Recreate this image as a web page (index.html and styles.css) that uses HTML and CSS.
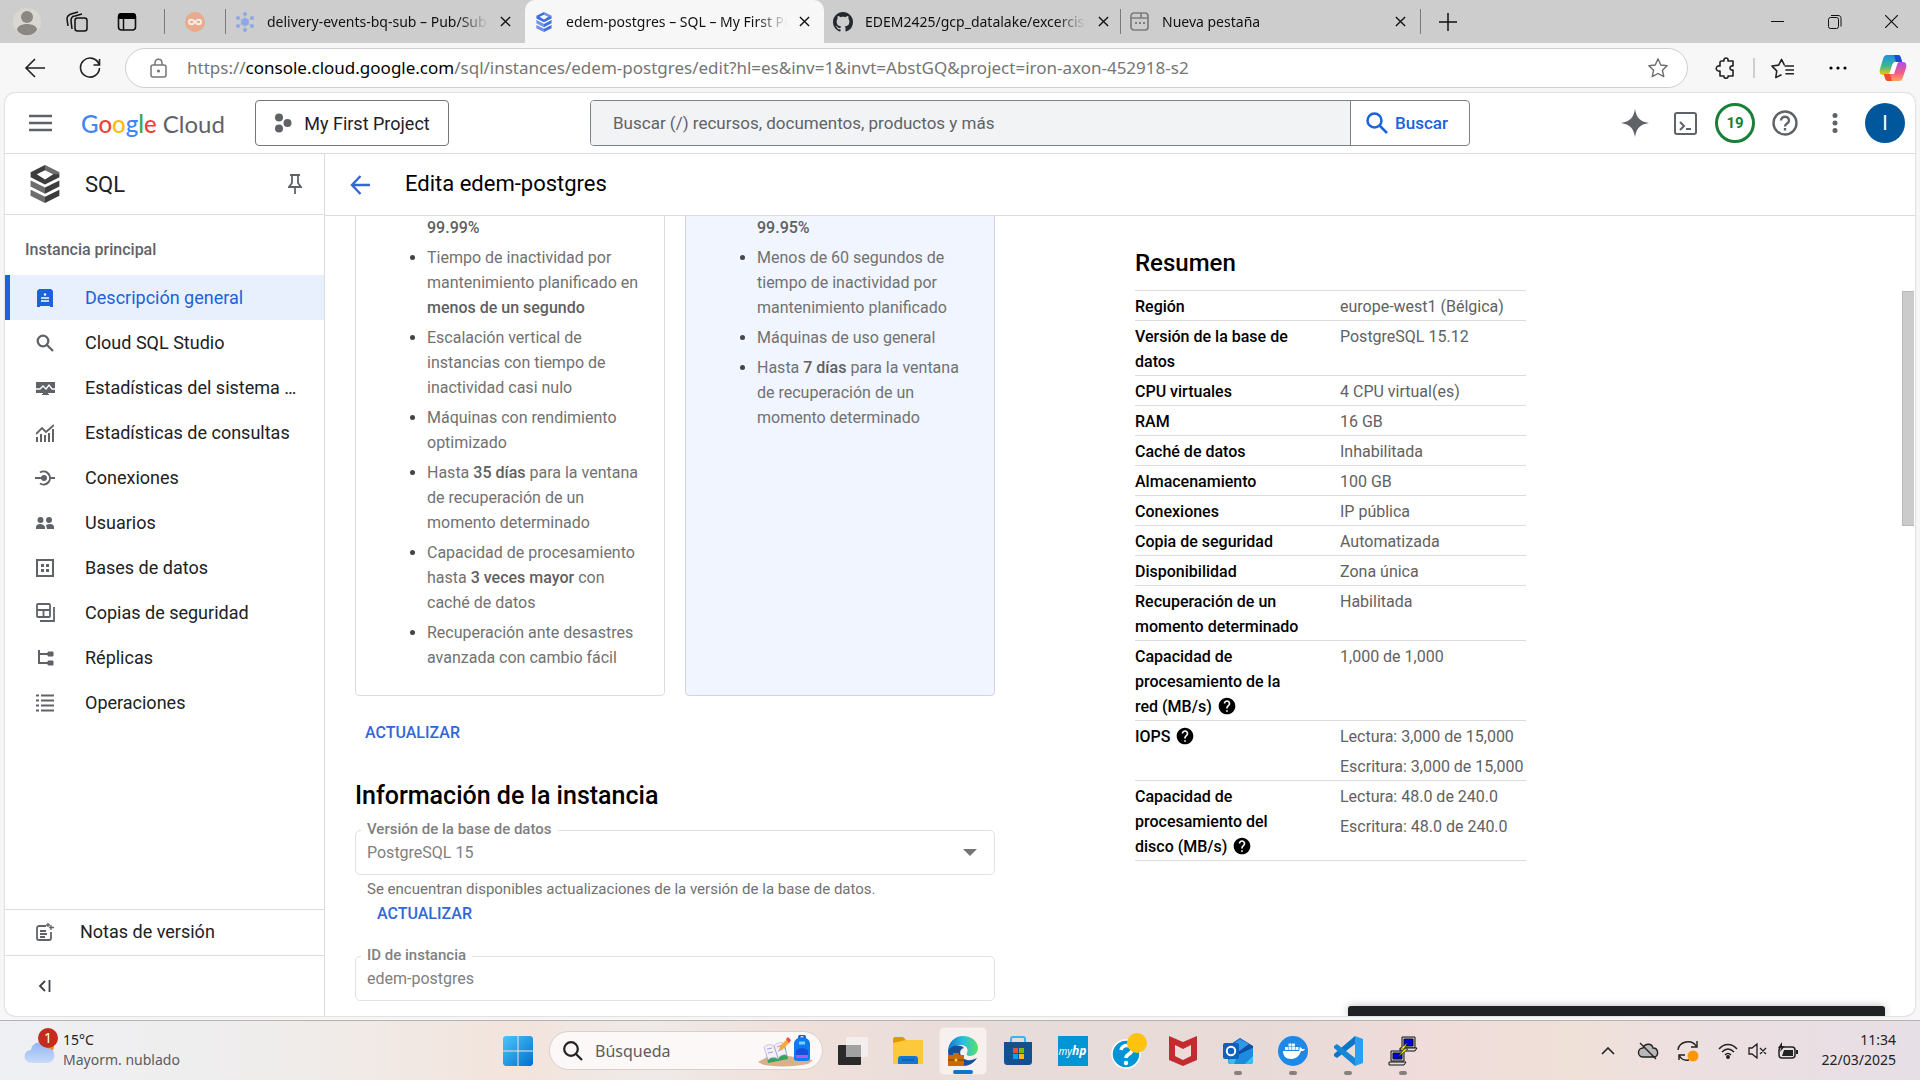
FILE: index.html
```html
<!DOCTYPE html>
<html lang="es">
<head>
<meta charset="utf-8">
<title>edem-postgres – SQL – My First Project</title>
<link rel="stylesheet" href="styles.css">
</head>
<body>
<svg class="defs" aria-hidden="true">
  <defs>
    <symbol id="x" viewBox="0 0 12 12"><path d="M1 1l10 10M11 1L1 11" fill="none" stroke="currentColor" stroke-width="1.5"/></symbol>
    <symbol id="sql" viewBox="0 0 28 37"><path fill="currentColor" fill-rule="evenodd" d="M14 0L0 7v5l14 7 14-7V7zM14 5l8 4-8 5-8-5zM0 15v6l14 7 14-7v-6l-14 7zM0 24v6l14 7 14-7v-6l-14 7z"/><path fill="#fff" fill-opacity=".25" d="M0 15v6l14 7v-6zM0 24v6l14 7v-6zM14 0l14 7v2h-6l-8-4z"/></symbol>
    <symbol id="q" viewBox="0 0 24 24"><path fill="currentColor" d="M12 2C6.48 2 2 6.48 2 12s4.48 10 10 10 10-4.48 10-10S17.52 2 12 2zm1 17h-2v-2h2v2zm2.07-7.75l-.9.92C13.45 12.9 13 13.5 13 15h-2v-.5c0-1.1.45-2.1 1.17-2.83l1.24-1.26c.37-.36.59-.86.59-1.41 0-1.1-.9-2-2-2s-2 .9-2 2H8c0-2.21 1.79-4 4-4s4 1.79 4 4c0 .88-.36 1.68-.93 2.25z"/></symbol>
  </defs>
</svg>
<div class="screen">
  <div class="tabstrip">
    <button class="cell50" aria-label="Perfil"><svg width="28" height="28" viewBox="0 0 28 28"><circle cx="14" cy="14" r="14" fill="#dad7d3"/><circle cx="14" cy="9" r="6" fill="#8b8782"/><path d="M4 22c0-8 20-8 20 0-4 7-16 7-20 0z" fill="#8b8782"/></svg></button>
    <button class="cell50" aria-label="Áreas de trabajo"><svg width="22" height="22" viewBox="0 0 22 22" fill="none" stroke="#111" stroke-width="1.5"><rect x="9" y="7" width="12" height="13" rx="2.5"/><path d="M6 18l-1-8c0-3 1-5 4-5l7-2M2 15L1 8c0-3 1-4 4-5l7-2"/></svg></button>
    <button class="cell50" aria-label="Menú de pestañas"><svg width="20" height="20" viewBox="0 0 20 20"><rect x="1.500" y="2" width="17" height="16" rx="3" fill="none" stroke="#111" stroke-width="1.600"/><path d="M1 7V4c0-2 1-3 3-3h12c2 0 3 1 3 3v3z" fill="#000"/><path d="M6.500 7v11" stroke="#111" stroke-width="1.500"/></svg></button>
    <span class="sep"></span>
    <a class="pinned" href="#" aria-label="OpenWebinars"><svg width="20" height="20" viewBox="0 0 20 20"><circle cx="10" cy="10" r="10" fill="#e9ab8c"/><path d="M10 10c-2-3-6-3-6 0s4 3 6 0 6-3 6 0-4 3-6 0z" fill="none" stroke="#f3ece6" stroke-width="2"/></svg></a>
    <span class="sep"></span>
    <div class="tab">
      <svg width="20" height="20" viewBox="0 0 20 20" fill="#8fa8e6" stroke="#8fa8e6"><circle cx="10" cy="10" r="3.500"/><g stroke-width=".6"><path d="M10 2v16M3 6l14 8M17 6L3 14"/></g><g stroke="none"><circle cx="10" cy="2" r="2"/><circle cx="10" cy="18" r="2"/><circle cx="3" cy="6" r="2"/><circle cx="17" cy="6" r="2"/><circle cx="3" cy="14" r="2"/><circle cx="17" cy="14" r="2"/></g></svg>
      <a class="tab-name" href="#">delivery-events-bq-sub – Pub/Sub</a>
      <button class="close" aria-label="Cerrar"><svg width="11" height="11"><use href="#x"/></svg></button>
    </div>
    <div class="tab active">
      <svg class="sql-blue" width="20" height="20"><use href="#sql"/></svg>
      <a class="tab-name" href="#">edem-postgres – SQL – My First Project</a>
      <button class="close" aria-label="Cerrar"><svg width="11" height="11"><use href="#x"/></svg></button>
    </div>
    <div class="tab">
      <svg width="20" height="20" viewBox="0 0 16 16"><path fill="#24292f" d="M8 0C3.580 0 0 3.580 0 8c0 3.540 2.290 6.530 5.470 7.590.4.070.55-.17.55-.38 0-.19-.01-.82-.01-1.490-2.010.37-2.530-.49-2.690-.94-.09-.23-.48-.94-.82-1.130-.28-.15-.68-.52-.01-.53.63-.01 1.080.58 1.230.82.72 1.210 1.870.87 2.330.66.07-.52.28-.87.51-1.070-1.780-.2-3.640-.89-3.640-3.950 0-.87.31-1.590.82-2.150-.08-.2-.36-1.020.08-2.120 0 0 .67-.21 2.200.82.64-.18 1.320-.27 2-.27s1.360.09 2 .27c1.530-1.040 2.200-.82 2.200-.82.44 1.100.16 1.920.08 2.120.51.56.82 1.270.82 2.150 0 3.070-1.870 3.750-3.650 3.950.29.25.54.73.54 1.480 0 1.070-.01 1.930-.01 2.200 0 .21.15.46.55.38A8.010 8.010 0 0016 8c0-4.420-3.580-8-8-8z"/></svg>
      <a class="tab-name" href="#">EDEM2425/gcp_datalake/excercise</a>
      <button class="close" aria-label="Cerrar"><svg width="11" height="11"><use href="#x"/></svg></button>
    </div>
    <span class="sep tight"></span>
    <div class="tab">
      <svg width="20" height="20" viewBox="0 0 20 20" fill="none" stroke="#7d7d7d" stroke-width="1.700"><rect x="1" y="1" width="17" height="17" rx="3"/><path d="M1 6h17M11 1v5"/><path d="M5 11h2m2 0h2m2 0h2" stroke-width="2"/></svg>
      <a class="tab-name" href="#">Nueva pestaña</a>
      <button class="close" aria-label="Cerrar"><svg width="11" height="11"><use href="#x"/></svg></button>
    </div>
    <span class="sep flush"></span>
    <button class="cell50 plus" aria-label="Nueva pestaña"><svg width="18" height="18" viewBox="0 0 18 18"><path d="M9 0v18M0 9h18" stroke="#111" stroke-width="1.500"/></svg></button>
    <div class="window-buttons">
      <button aria-label="Minimizar"><svg width="13" height="13" viewBox="0 0 13 13"><path d="M0 6.500h13" stroke="#111"/></svg></button>
      <button aria-label="Restaurar"><svg width="14" height="14" viewBox="0 0 14 14" fill="none" stroke="#111"><rect x=".5" y="2.500" width="10" height="11" rx="2"/><path d="M3 .5h7c2 0 3 1 3 3v8"/></svg></button>
      <button aria-label="Cerrar ventana"><svg width="13" height="13" viewBox="0 0 13 13"><path d="M0 0l13 13M13 0L0 13" stroke="#111" stroke-width="1.200"/></svg></button>
    </div>
  </div>

  <div class="toolbar">
    <button class="tool" aria-label="Atrás"><svg width="22" height="20" viewBox="0 0 22 20" fill="none" stroke="#222" stroke-width="1.600"><path d="M21 10H2M11 1l-9 9 9 9"/></svg></button>
    <button class="tool" aria-label="Actualizar"><svg width="22" height="22" viewBox="0 0 22 22" fill="none" stroke="#222" stroke-width="1.600"><path d="M20 7.500A9.500 9.500 0 1 0 20.500 11M20.500 2v6h-6"/></svg></button>
    <form class="address">
      <svg width="18" height="20" viewBox="0 0 18 20" fill="none" stroke="#767676" stroke-width="1.500"><rect x="1" y="7" width="15" height="12" rx="2"/><path d="M5 7V5c0-5 7-5 7 0v2"/><circle cx="8.500" cy="13" r=".8" fill="#555"/></svg>
      <a class="url" href="#">https://<b>console.cloud.google.com</b>/sql/instances/edem-postgres/edit?hl=es&amp;inv=1&amp;invt=AbstGQ&amp;project=iron-axon-452918-s2</a>
      <button type="button" aria-label="Favorito"><svg width="22" height="22" viewBox="0 0 24 24" fill="none" stroke="#6b6b6b" stroke-width="1.500"><path d="M12 2l3 6.700 7 .8-5.200 4.900 1.500 7L12 18l-6.300 3.400 1.500-7L2 9.500l7-.8z" stroke-linejoin="round"/></svg></button>
    </form>
    <button class="tool ext" aria-label="Extensiones"><svg width="22" height="22" viewBox="0 0 22 22" fill="none" stroke="#222" stroke-width="1.600"><path d="M6 4h3c-1-4 5-4 4 0h5v5c-4-1-4 5 0 4v6h-5c1 3-5 3-4 0H5v-5C0 15 0 8 5 9V5z" stroke-linejoin="round"/></svg></button>
    <span class="tool-sep"></span>
    <button class="tool" aria-label="Favoritos"><svg width="23" height="22" viewBox="0 0 24 22" fill="none" stroke="#222" stroke-width="1.600"><path d="M14 8l-3-6-3 6-7 1 5 5-1 7 6-3M14 9h10M15 13h9M15 17h9" stroke-linejoin="round"/></svg></button>
    <button class="tool" aria-label="Más"><svg width="18" height="4" viewBox="0 0 18 4"><circle cx="2" cy="2" r="1.600"/><circle cx="9" cy="2" r="1.600"/><circle cx="16" cy="2" r="1.600"/></svg></button>
    <button class="tool" aria-label="Copilot"><svg width="28" height="28" viewBox="0 0 28 28"><defs><linearGradient id="c1" x1="0" y1="0" x2="0" y2="1"><stop offset="0" stop-color="#1c8fe8"/><stop offset=".55" stop-color="#3bb88c"/><stop offset="1" stop-color="#f5c800"/></linearGradient><linearGradient id="c2" x1="0" y1="0" x2="0" y2="1"><stop offset="0" stop-color="#a951e8"/><stop offset=".55" stop-color="#ef5b8a"/><stop offset="1" stop-color="#ffa45c"/></linearGradient></defs><path d="M8 1h11c2 0 2 1 3 3l1 4h-6c-2 0-3 1-4 3l-2 7c-1 2-2 3-4 3H4c-3 0-4-3-3-6L4 5c1-3 2-4 4-4z" fill="url(#c1)"/><path d="M15 1h4c2 0 2 1 3 3l1 4h-6z" fill="#154fd0"/><path d="M20 27H9c-2 0-2-1-3-3l-1-4h6c2 0 3-1 4-3l2-6c1-2 2-3 4-3h3c3 0 4 3 3 6l-3 9c-1 3-2 4-4 4z" fill="url(#c2)"/><path d="M5 20h6l2 7H9c-2 0-3-2-4-7z" fill="#f0492c"/><path d="M15 8h4l-4 12h-4z" fill="#fff"/></svg></button>
  </div>

  <div class="page">
    <header class="console-bar">
      <button class="burger" aria-label="Menú"><svg width="23" height="18" viewBox="0 0 23 18"><path d="M0 2h23M0 9h23M0 16h23" stroke="#5f6368" stroke-width="2.500"/></svg></button>
      <a class="logo" href="#"><b><span class="g-blue">G</span><span class="g-red">o</span><span class="g-yellow">o</span><span class="g-blue">g</span><span class="g-green">l</span><span class="g-red">e</span></b> Cloud</a>
      <button class="project"><svg width="18" height="20" viewBox="0 0 18 20" fill="#5f6368"><circle cx="5" cy="4.500" r="4"/><circle cx="13.500" cy="10" r="4"/><circle cx="5" cy="15.500" r="4"/></svg>My First Project</button>
      <form class="search">
        <input type="text" aria-label="Buscar" placeholder="Buscar (/) recursos, documentos, productos y más">
        <button type="button"><svg width="22" height="22" viewBox="0 0 22 22" fill="none" stroke="#1a63d8" stroke-width="2.500"><circle cx="8.500" cy="8.500" r="7"/><path d="M13.500 13.500l7.500 7.500"/></svg>Buscar</button>
      </form>
      <div class="console-actions">
        <button aria-label="Gemini"><svg width="28" height="28" viewBox="0 0 28 28"><path d="M14 0c1.500 9 5 12.500 14 14-9 1.500-12.500 5-14 14-1.500-9-5-12.500-14-14 9-1.500 12.500-5 14-14z" fill="#5f6368"/></svg></button>
        <button aria-label="Cloud Shell"><svg width="23" height="23" viewBox="0 0 23 23" fill="none" stroke="#5f6368" stroke-width="2"><rect x="1" y="1" width="21" height="21" rx="2"/><path d="M6 10l4 4-4 4M12 17h5"/></svg></button>
        <button aria-label="Notificaciones"><span class="count">19</span></button>
        <button aria-label="Ayuda"><svg width="26" height="26" viewBox="0 0 26 26" fill="none" stroke="#5f6368" stroke-width="2.400"><circle cx="13" cy="13" r="11.500"/><path d="M9 10.500c0-5 8-5 8 0 0 3-4 3-4 6"/><path d="M13 18v2.500"/></svg></button>
        <button aria-label="Más opciones"><svg width="6" height="20" viewBox="0 0 6 20" fill="#5f6368"><circle cx="3" cy="2.500" r="2.500"/><circle cx="3" cy="10" r="2.500"/><circle cx="3" cy="17.500" r="2.500"/></svg></button>
        <button aria-label="Cuenta"><span class="avatar">I</span></button>
      </div>
    </header>

    <div class="console-body">
      <nav class="sidebar">
        <div class="product">
          <svg class="sql-gray" width="30" height="38"><use href="#sql"/></svg>
          <span class="product-name">SQL</span>
          <button aria-label="Fijar"><svg width="14" height="20" viewBox="0 0 14 20" fill="none" stroke="#5f6368" stroke-width="1.800"><path d="M2 1h10M4 1v8l-3 4h12l-3-4V1M7 13v7"/></svg></button>
        </div>
        <div class="nav-group">Instancia principal</div>
        <a class="nav-item current" href="#"><svg width="18" height="18" viewBox="0 0 18 18"><path d="M3 0h12l2 2v16h-3v-1H4v1H1V2z" fill="#1a63d8"/><path d="M5 9h8M5 12h8" stroke="#fff" stroke-width="1.300"/><circle cx="9" cy="5.500" r="1.200" fill="#fff"/></svg><span>Descripción general</span></a>
        <a class="nav-item" href="#"><svg width="18" height="18" viewBox="0 0 18 18" fill="none" stroke="#5f6368" stroke-width="2.300"><circle cx="7" cy="7" r="5.300"/><path d="M11 11l6 6"/></svg><span>Cloud SQL Studio</span></a>
        <a class="nav-item" href="#"><svg width="19" height="18" viewBox="0 0 19 18"><path d="M0 3h19v11h-7v1H7v-1H0z" fill="#5f6368"/><path d="M0 10h4l3-3 3 3 3-4 3 4h3" stroke="#fff" stroke-width="1.300" fill="none"/><path d="M6 15.500h7" stroke="#5f6368"/></svg><span>Estadísticas del sistema de la instancia</span></a>
        <a class="nav-item" href="#"><svg width="18" height="18" viewBox="0 0 18 18" fill="none" stroke="#5f6368" stroke-width="2"><path d="M0 10l6-6 4 4 8-7" stroke-width="1.800"/><path d="M1 18v-5M5 18v-8M9 18v-7M13 18V9M17 18V5"/></svg><span>Estadísticas de consultas</span></a>
        <a class="nav-item" href="#"><svg width="20" height="18" viewBox="0 0 20 18" fill="none" stroke="#5f6368" stroke-width="2"><path d="M0 9h6M15 9h5M5 3.500a6.500 6.500 0 1 1 0 11"/><circle cx="9" cy="9" r="3" fill="#5f6368" stroke="none"/></svg><span>Conexiones</span></a>
        <a class="nav-item" href="#"><svg width="18" height="18" viewBox="0 0 18 18" fill="#5f6368"><circle cx="4.500" cy="6" r="3"/><circle cx="13" cy="6" r="3"/><path d="M0 15v-2c0-4 8-4 9 0v2zM11 15h7v-2c0-3-4-4-8-2z"/></svg><span>Usuarios</span></a>
        <a class="nav-item" href="#"><svg width="18" height="18" viewBox="0 0 18 18" fill="#5f6368"><rect x="1" y="1" width="16" height="16" fill="none" stroke="#5f6368" stroke-width="2"/><path d="M5 5h3v3H5zM10 5h3v3h-3zM5 10h3v3H5zM10 10h3v3h-3z"/></svg><span>Bases de datos</span></a>
        <a class="nav-item" href="#"><svg width="19" height="19" viewBox="0 0 19 19" fill="none" stroke="#5f6368" stroke-width="1.800"><rect x="1" y="1" width="13" height="13" rx="1"/><path d="M1 7h13M7.500 7v7M4 18h14V4"/></svg><span>Copias de seguridad</span></a>
        <a class="nav-item" href="#"><svg width="17" height="18" viewBox="0 0 17 18" fill="none" stroke="#5f6368" stroke-width="2"><path d="M2 1v13h10M2 5h10"/><path d="M11 3h5v4h-5zM11 12h5v4h-5z" fill="#5f6368" stroke-width="1"/></svg><span>Réplicas</span></a>
        <a class="nav-item" href="#"><svg width="18" height="18" viewBox="0 0 18 18"><path d="M0 1.500h3M0 6.500h3M0 11.500h3M0 16.500h3M5 1.500h13M5 6.500h13M5 11.500h13M5 16.500h13" stroke="#5f6368" stroke-width="2"/></svg><span>Operaciones</span></a>
        <div class="sidebar-foot">
          <a class="notes" href="#"><svg width="18" height="18" viewBox="0 0 18 18" fill="none" stroke="#5f6368" stroke-width="1.800"><path d="M10 3H3c-1 0-2 1-2 2v10c0 1 1 2 2 2h10c1 0 2-1 2-2V9M4 8h6M4 11h7M4 14h5"/><path d="M12 0v4M10 2h4M15 2v5M13 4.500h5" stroke-width="1.300"/></svg><span>Notas de versión</span></a>
          <button class="collapse" aria-label="Contraer"><svg width="13" height="12" viewBox="0 0 13 12" fill="none" stroke="#3c4043" stroke-width="1.800"><path d="M7 1L2 6l5 5M11.500 0v12"/></svg></button>
        </div>
      </nav>

      <main class="main">
        <div class="title-row">
          <button aria-label="Volver"><svg width="20" height="20" viewBox="0 0 20 20" fill="none" stroke="#3367d6" stroke-width="2.400"><path d="M20 10H2M10.500 1L2 10l8.500 9"/></svg></button>
          <h1>Edita edem-postgres</h1>
        </div>
        <div class="scroller">
          <div class="form-col">
            <div class="editions">
              <section class="edition">
                <ul>
                  <li class="rest"><b>99.99%</b></li>
                  <li>Tiempo de inactividad por mantenimiento planificado en <b>menos de un segundo</b></li>
                  <li>Escalación vertical de instancias con tiempo de inactividad casi nulo</li>
                  <li>Máquinas con rendimiento optimizado</li>
                  <li>Hasta <b>35 días</b> para la ventana de recuperación de un momento determinado</li>
                  <li>Capacidad de procesamiento hasta <b>3 veces mayor</b> con caché de datos</li>
                  <li>Recuperación ante desastres avanzada con cambio fácil</li>
                </ul>
              </section>
              <section class="edition chosen">
                <ul>
                  <li class="rest"><b>99.95%</b></li>
                  <li>Menos de 60 segundos de tiempo de inactividad por mantenimiento planificado</li>
                  <li>Máquinas de uso general</li>
                  <li>Hasta <b>7 días</b> para la ventana de recuperación de un momento determinado</li>
                </ul>
              </section>
            </div>
            <button class="text-button upgrade">ACTUALIZAR</button>
            <h2>Información de la instancia</h2>
            <div class="field">
              <label for="version">Versión de la base de datos</label>
              <select id="version" disabled><option>PostgreSQL 15</option></select>
              <svg class="arrow" width="14" height="7" viewBox="0 0 14 7"><path d="M0 0h14L7 7z" fill="#757575"/></svg>
            </div>
            <p class="hint">Se encuentran disponibles actualizaciones de la versión de la base de datos.</p>
            <button class="text-button nested">ACTUALIZAR</button>
            <div class="field">
              <label for="instance">ID de instancia</label>
              <input id="instance" type="text" value="edem-postgres" disabled>
            </div>
          </div>
          <aside class="summary">
            <h2>Resumen</h2>
            <table>
              <tr><th scope="row">Región</th><td>europe-west1 (Bélgica)</td></tr>
              <tr><th scope="row">Versión de la base de datos</th><td>PostgreSQL 15.12</td></tr>
              <tr><th scope="row">CPU virtuales</th><td>4 CPU virtual(es)</td></tr>
              <tr><th scope="row">RAM</th><td>16 GB</td></tr>
              <tr><th scope="row">Caché de datos</th><td>Inhabilitada</td></tr>
              <tr><th scope="row">Almacenamiento</th><td>100 GB</td></tr>
              <tr><th scope="row">Conexiones</th><td>IP pública</td></tr>
              <tr><th scope="row">Copia de seguridad</th><td>Automatizada</td></tr>
              <tr><th scope="row">Disponibilidad</th><td>Zona única</td></tr>
              <tr><th scope="row">Recuperación de un momento determinado</th><td>Habilitada</td></tr>
              <tr><th scope="row">Capacidad de procesamiento de la red (MB/s) <svg class="help" width="20" height="20"><use href="#q"/></svg></th><td>1,000 de 1,000</td></tr>
              <tr><th scope="row">IOPS <svg class="help" width="20" height="20"><use href="#q"/></svg></th><td><div>Lectura: 3,000 de 15,000</div><div>Escritura: 3,000 de 15,000</div></td></tr>
              <tr><th scope="row">Capacidad de procesamiento del disco (MB/s) <svg class="help" width="20" height="20"><use href="#q"/></svg></th><td><div>Lectura: 48.0 de 240.0</div><div>Escritura: 48.0 de 240.0</div></td></tr>
            </table>
          </aside>
          <div class="track"><div class="thumb"></div></div>
        </div>
      </main>
    </div>
    <div class="snackbar"></div>
  </div>

  <footer class="taskbar">
    <div class="weather">
      <svg width="34" height="40" viewBox="0 0 34 40"><defs><linearGradient id="cl" x1="0" y1="0" x2="0" y2="1"><stop offset="0" stop-color="#8fb4f4"/><stop offset="1" stop-color="#c9dcf8"/></linearGradient></defs><circle cx="24" cy="20" r="6" fill="#f08a1c"/><path d="M7 36a6.500 6.500 0 0 1 0-13c1-9 14-10 16-2 10 0 10 15 0 15z" fill="url(#cl)"/><circle cx="24" cy="11" r="10" fill="#c42b1c"/></svg>
      <span class="badge">1</span>
      <div class="weather-text"><span>15°C</span><span class="dim">Mayorm. nublado</span></div>
    </div>
    <div class="apps">
      <button class="app" aria-label="Inicio"><svg width="30" height="30" viewBox="0 0 30 30"><defs><linearGradient id="w" gradientUnits="userSpaceOnUse" x1="0" y1="0" x2="30" y2="30"><stop offset="0" stop-color="#4cc6fa"/><stop offset="1" stop-color="#0070cf"/></linearGradient></defs><path d="M2 0h12.500v14.500H0V2zM15.500 0H28l2 2v12.500H15.500zM0 15.500h14.500V30H2l-2-2zM15.500 15.500H30V28l-2 2H15.500z" fill="url(#w)"/></svg></button>
      <label class="task-search"><svg width="20" height="20" viewBox="0 0 20 20" fill="none" stroke="#222" stroke-width="2.200"><circle cx="8" cy="8" r="6.800"/><path d="M13 13l6 6"/></svg><input type="text" aria-label="Búsqueda" placeholder="Búsqueda"><svg width="58" height="32" viewBox="0 0 58 32"><path d="M1 27c8-5 16-8 24-7l31 5-5 4c-14 3-32 3-44 1z" fill="#d8b08a"/><path d="M8 13l20-3 3 14-20 4z" fill="#35a45a"/><path d="M7 12c4-3 7-3 10-1 2-3 6-4 9-3l4 12c-4-1-8 1-9 4-3-2-7-2-10 1z" fill="#f4f0fa" stroke="#b8aed0" stroke-width=".7"/><path d="M17 11l4 12M10 14l5-1M11 18l5-1M20 12l5-2M21 16l5-2" stroke="#a99fc8"/><path d="M22 15l1-4 7-7 3 3-7 7z" fill="#f9a93a"/><path d="M29 4l2-2 3 3-2 3z" fill="#e8524a"/><path d="M37 9c0-9 16-9 16 0v14c0 3-2 3-8 3s-8 0-8-3z" fill="#0a7cf0"/><path d="M42 3c0-4 6-4 6 0" fill="none" stroke="#0a62c8" stroke-width="2"/><path d="M39 17c0-5 12-5 12 0v6H39z" fill="#1450d8"/><path d="M39 20h12v3H39z" fill="#a75bf0"/><path d="M42 8h6" stroke="#7fd0ff" stroke-width="3"/></svg></label>
      <button class="app" aria-label="Vista de tareas"><svg width="30" height="30" viewBox="0 0 30 30"><rect y="9" width="23" height="20" rx="1" fill="#2a2a2a"/><rect x="8" y="1" width="22" height="20" rx="1" fill="#f2f2f2" fill-opacity=".8"/><path d="M8 9h15v12H8z" fill="#a2a2a2"/></svg></button>
      <button class="app" aria-label="Explorador"><svg width="30" height="30" viewBox="0 0 30 30"><path d="M0 3c0-1 1-2 2-2h8l3 3v5H0z" fill="#dd9a00"/><path d="M0 7l13-3h17v22c0 1 0 2-1 2H1c-1 0-1-1-1-2z" fill="#fdc93a"/><path d="M5 28v-5c0-2 1-3 3-3h14c2 0 3 1 3 3v5z" fill="#1478d0"/><path d="M9 24h12" stroke="#0d4fa0"/></svg></button>
      <button class="app running focused" aria-label="Edge"><svg width="32" height="32" viewBox="0 0 32 32"><defs><linearGradient id="e" x1="0" y1="0" x2="1" y2="0"><stop offset="0" stop-color="#1276cf"/><stop offset=".5" stop-color="#2bbde0"/><stop offset="1" stop-color="#59e067"/></linearGradient></defs><path d="M1 17C1 7 8 1 16 1c9 0 15 6 15 12 0 5-4 8-8 8-3 0-4-1-3-3 2-4-1-8-6-8-6 0-11 4-13 7z" fill="url(#e)"/><path d="M1 16c3-6 12-7 16-3-6 1-5 10 3 12 4 1 7-1 10-2-3 5-8 8-14 8C7 31 1 25 1 16z" fill="#174f9c"/><path d="M6 20v-2h6v2h5v11H1V20z" fill="#c86a0a"/><path d="M1 25h16" stroke="#7a3b00"/><circle cx="9" cy="25" r="1.500" fill="#ffd23a"/></svg></button>
      <button class="app" aria-label="Store"><svg width="30" height="30" viewBox="0 0 30 30"><path d="M8 7V3c0-2 1-2 2-2h10c1 0 2 0 2 2v4" fill="none" stroke="#33b8ee" stroke-width="2"/><path d="M1 6h28v19c0 3-1 4-4 4H5c-3 0-4-1-4-4z" fill="#15508f"/><path d="M10 12h5v5h-5z" fill="#f25022"/><path d="M16 12h5v5h-5z" fill="#7fba00"/><path d="M10 18h5v5h-5z" fill="#00a4ef"/><path d="M16 18h5v5h-5z" fill="#ffb900"/></svg></button>
      <button class="app" aria-label="myHP"><span class="myhp">my<b>hp</b></span></button>
      <button class="app" aria-label="HP Support"><svg width="38" height="38" viewBox="0 0 38 38"><circle cx="17" cy="22" r="14" fill="#0096d6" stroke="#fff" stroke-width="1.500"/><path d="M12 18c1-6 11-6 11 0 0 4-6 4-6 8" fill="none" stroke="#fff" stroke-width="3.500"/><circle cx="17" cy="31" r="2.200" fill="#fff"/><circle cx="28" cy="11" r="10" fill="#ffc20e"/></svg></button>
      <button class="app" aria-label="McAfee"><svg width="28" height="30" viewBox="0 0 28 30"><path d="M0 0l14 6L28 0v24l-14 6-14-6z" fill="#c22b2f"/><path d="M6 9l8 4 8-4v11l-8 4-8-4z" fill="#ecdcd8"/></svg></button>
      <button class="app running" aria-label="Outlook"><svg width="30" height="30" viewBox="0 0 30 30"><path d="M5 10L17 2l13 8v15c0 2-1 3-3 3H8c-2 0-3-1-3-3z" fill="#0f4fa8"/><path d="M8 9l9-6 9 5-11 8z" fill="#2f9ae8"/><path d="M5 24l25-12v13c0 2-1 3-3 3H8c-2 0-3-1-3-4z" fill="#35c0f0"/><path d="M15 19l15-7v8l-8 8H11z" fill="#1c8ce0"/><rect y="7" width="16" height="16" rx="2" fill="#0d62bd"/><circle cx="8" cy="15" r="4.200" fill="none" stroke="#fff" stroke-width="2"/></svg></button>
      <button class="app running" aria-label="Docker"><svg width="30" height="30" viewBox="0 0 30 30"><circle cx="15" cy="15" r="15" fill="#1d88e8"/><path d="M5 15h16c1-1 0-3 1-4 1 1 2 1 2 2h3c-1 2-2 2-4 2-2 6-6 8-10 8-5 0-8-3-8-8z" fill="#fff"/><path d="M7 11h3v3H7zM10.500 11h3v3h-3zM14 11h3v3h-3zM17.500 11h3v3h-3zM10.500 7.500h3v3h-3zM14 7.500h3v3h-3z" fill="#e8f3fd"/></svg></button>
      <button class="app running" aria-label="Visual Studio Code"><svg width="30" height="30" viewBox="0 0 30 30"><path d="M22 0l8 3v24l-8 3z" fill="#27a0f0"/><path d="M22 0v8L4 22l-3-2v-2z" fill="#0a76c4"/><path d="M22 30v-8L4 8l-3 2v2z" fill="#1587d6"/></svg></button>
      <button class="app running" aria-label="PuTTY"><svg width="30" height="30" viewBox="0 0 30 30" stroke="#111"><path d="M14 1h13v11H14z" fill="#ccc"/><path d="M16 3h9v7h-9z" fill="#0000e0"/><path d="M12 12h17l-2 3H12z" fill="#ddd"/><path d="M3 15h13v10H3z" fill="#ccc"/><path d="M5 17h9v6H5z" fill="#0000e0"/><path d="M1 26h17l-2 3H1z" fill="#ddd"/><path d="M20 6l-8 7h4l-6 8 10-8h-4z" fill="#ff0" stroke-width=".6"/></svg></button>
    </div>
    <div class="tray">
      <button class="chev" aria-label="Iconos ocultos"><svg width="14" height="8" viewBox="0 0 14 8" fill="none" stroke="#222" stroke-width="1.600"><path d="M1 7l6-6 6 6"/></svg></button>
      <button class="cloud" aria-label="OneDrive"><svg width="22" height="18" viewBox="0 0 22 18" fill="#b9b7b7" stroke="#222" stroke-width="1.400"><path d="M6 15a4.500 4.500 0 0 1 0-9c2-5 9-5 10 0 6 0 6 9 1 9zM3 1l16 16"/></svg></button>
      <button class="sync" aria-label="Sincronización"><svg width="22" height="22" viewBox="0 0 22 22" fill="none" stroke="#222" stroke-width="1.400"><path d="M1 10C2 1 15-1 19 6M20 1v6h-6M12 20c-5 1-8-1-10-5M2 20v-5h6"/><circle cx="16" cy="16" r="5.500" fill="#ff9800" stroke="none"/></svg></button>
      <button class="status" aria-label="Red, volumen y batería">
        <svg width="20" height="16" viewBox="0 0 20 16" fill="none" stroke="#222" stroke-width="1.500"><path d="M1 6c5-6 13-6 18 0M4 9c4-4 8-4 12 0M7 12c2-2 4-2 6 0"/><circle cx="10" cy="14" r="1.200" fill="#222"/></svg>
        <svg width="20" height="16" viewBox="0 0 20 16" fill="none" stroke="#222" stroke-width="1.300"><path d="M1 5h3l5-4v14l-5-4H1zM12 5l6 6M18 5l-6 6"/></svg>
        <svg width="20" height="18" viewBox="0 0 20 18"><rect x="1" y="5" width="16" height="11" rx="3" fill="none" stroke="#222" stroke-width="1.500"/><path d="M4 14l2-6h9v6zM18 8h2v4h-2zM4 0L0 6h3L2 10l5-6H4z" fill="#222"/></svg>
      </button>
      <div class="clock"><span>11:34</span><span>22/03/2025</span></div>
    </div>
  </footer>
</div>
</body>
</html>
```
FILE: styles.css
```css
* { box-sizing: border-box; }

body {
  margin: 0;
  font-family: Roboto, "Liberation Sans", sans-serif;
  font-size: 16px;
  color: #202124;
}

button, input, select {
  font: inherit;
  color: inherit;
  border: 0;
  background: none;
  padding: 0;
  margin: 0;
}

button { display: flex; align-items: center; justify-content: center; }
a { color: inherit; text-decoration: none; }
svg { display: block; flex: none; }
.defs { position: absolute; width: 0; height: 0; }

.screen {
  height: 100vh;
  display: flex;
  flex-direction: column;
  overflow: hidden;
  background: #f7f7f7;
}

/* Browser tabs */
.tabstrip {
  flex: none;
  height: 43px;
  display: flex;
  align-items: center;
  padding-left: 2px;
  background: #cdcdcd;
  font-family: "Noto Sans", sans-serif;
  font-size: 14px;
  color: #111;
}
.cell50 { width: 50px; height: 43px; }
.sep { width: 1px; height: 25px; background: #7a7a7a; margin-left: 12px; }
.sep.tight { margin-left: -3px; }
.sep.flush { margin-left: 0; }
.pinned { margin-left: 20px; margin-right: 8px; }
.tab {
  flex: 0 1 299px;
  min-width: 0;
  height: 43px;
  display: flex;
  align-items: center;
  padding: 0 14px 0 9px;
}
.tab.active { background: #f7f7f7; border-radius: 10px 10px 0 0; }
.tab-name {
  flex: 1;
  margin: 0 12px;
  overflow: hidden;
  white-space: nowrap;
  -webkit-mask-image: linear-gradient(90deg, #000 calc(100% - 30px), transparent);
  mask-image: linear-gradient(90deg, #000 calc(100% - 30px), transparent);
}
.sql-blue { color: #3f6fe0; }
.sql-gray { color: #3d3d3d; }
.plus { width: 54px; }
.window-buttons { margin-left: auto; display: flex; }
.window-buttons button { width: 57px; height: 43px; }

/* Browser toolbar */
.toolbar {
  flex: none;
  height: 50px;
  display: flex;
  align-items: center;
  padding: 0 0 0 7px;
}
.tool { width: 55px; height: 40px; }
.address {
  flex: 1;
  height: 40px;
  display: flex;
  align-items: center;
  gap: 19px;
  margin-left: 8px;
  padding: 0 18px 0 24px;
  background: #fff;
  border: 1px solid #cfcfcf;
  border-radius: 20px;
}
.url {
  flex: 1;
  overflow: hidden;
  white-space: nowrap;
  font-family: "Noto Sans", sans-serif;
  font-size: 17px;
  line-height: 26px;
  color: #757575;
}
.url b { font-weight: 400; color: #000; }
.ext { margin-left: 10px; }
.tool-sep { width: 2px; height: 20px; background: #cfcfcf; }

/* Console page */
.page {
  flex: 1;
  min-height: 0;
  position: relative;
  display: flex;
  flex-direction: column;
  margin: 0 5px 4px;
  background: #fff;
  border-radius: 10px;
  box-shadow: 0 0 2px #aaa;
  overflow: hidden;
}
.console-bar {
  flex: none;
  height: 61px;
  display: flex;
  align-items: center;
  padding: 0 5px 0 12px;
  border-bottom: 1px solid #dadce0;
}
.burger { width: 46px; height: 46px; }
.logo {
  margin-left: 18px;
  width: 150px;
  font-family: Lato, sans-serif;
  font-size: 24px;
  white-space: nowrap;
  color: #5f6368;
}
.logo b { font-weight: 500; }
.g-blue { color: #4285f4; }
.g-red { color: #ea4335; }
.g-yellow { color: #fbbc04; }
.g-green { color: #34a853; }
.project {
  margin-left: 24px;
  width: 194px;
  height: 46px;
  gap: 12px;
  font-size: 18px;
  white-space: nowrap;
  border: 1px solid #747775;
  border-radius: 4px;
}
.search {
  flex: 0 1 880px;
  height: 46px;
  display: flex;
  margin-left: 141px;
  border: 1px solid #7c8087;
  border-radius: 4px;
  overflow: hidden;
}
.search input {
  flex: 1;
  min-width: 0;
  padding: 0 22px;
  background: #f1f3f4;
  border-right: 1px solid #7c8087;
  font-size: 17px;
}
.search input::placeholder { color: #5f6368; opacity: 1; }
.search button { width: 118px; gap: 7px; padding-right: 6px; font-size: 17px; font-weight: 500; color: #1a63d8; }
.console-actions { display: flex; margin-left: auto; }
.console-actions button { width: 50px; height: 50px; }
.count {
  width: 40px;
  height: 40px;
  border: 3px solid #188038;
  border-radius: 50%;
  color: #188038;
  font-size: 15px;
  font-weight: 700;
  line-height: 34px;
}
.avatar {
  width: 40px;
  height: 40px;
  border-radius: 50%;
  background: #00579b;
  color: #fff;
  font-size: 20px;
  line-height: 40px;
}

.console-body { flex: 1; min-height: 0; display: flex; }

.sidebar {
  flex: 0 0 320px;
  display: flex;
  flex-direction: column;
  border-right: 1px solid #dadce0;
}
.product {
  height: 61px;
  display: flex;
  align-items: center;
  padding: 0 22px 0 25px;
  border-bottom: 1px solid #dadce0;
}
.product-name { flex: 1; margin-left: 25px; font-size: 22px; }
.nav-group { padding: 0 20px; line-height: 24px; margin: 23px 0 13px; font-weight: 500; color: #5f6368; }
.nav-item {
  height: 45px;
  display: grid;
  grid-template-columns: 20px 1fr;
  column-gap: 30px;
  align-items: center;
  padding: 0 22px 0 25px;
  border-left: 5px solid transparent;
  font-size: 18px;
}
.nav-item svg { justify-self: center; }
.nav-item span { overflow: hidden; text-overflow: ellipsis; white-space: nowrap; }
.nav-item.current { background: #e8f0fe; border-left-color: #1a63d8; color: #1a63d8; }
.sidebar-foot { margin-top: auto; border-top: 1px solid #dadce0; }
.notes {
  height: 46px;
  display: flex;
  align-items: center;
  gap: 26px;
  padding-left: 31px;
  padding-bottom: 2px;
  font-size: 18px;
  border-bottom: 1px solid #dadce0;
}
.collapse { width: 78px; height: 60px; }

.main { flex: 1; min-width: 0; display: flex; flex-direction: column; }
.title-row {
  flex: none;
  height: 62px;
  display: flex;
  align-items: center;
  gap: 35px;
  padding-left: 25px;
  border-bottom: 1px solid #dadce0;
}
.title-row h1 { margin: 0; padding-bottom: 2px; font-size: 22px; font-weight: 400; color: #000; }

.scroller {
  flex: 1;
  min-height: 0;
  overflow: hidden;
  display: flex;
  align-items: flex-start;
  padding-left: 30px;
}
.form-col { flex: 0 1 640px; display: flex; flex-direction: column; align-items: stretch; color: #5f6368; }
.editions { display: grid; grid-template-columns: 1fr 1fr; gap: 20px; margin-top: -10px; }
.edition { border: 1px solid #dadce0; border-radius: 4px; padding: 8px 20px 25px 31px; }
.edition.chosen { background: #f0f5ff; border-color: #ccd3e4; }
.edition ul { margin: 0; padding-left: 40px; line-height: 25px; color: #717171; }
.edition li { margin-bottom: 5px; }
.edition li:last-child { margin-bottom: 0; }
.edition li::marker { color: #444; }
.edition .rest { list-style: none; }
.edition b { font-weight: 500; color: #5f5f5f; }

.text-button {
  align-self: flex-start;
  padding: 0 10px;
  line-height: 24px;
  font-weight: 500;
  color: #3367d6;
}
.upgrade { margin-top: 25px; }
h2 { margin: 0; font-size: 25px; line-height: 32px; font-weight: 500; color: #000; }
.form-col h2 { margin-top: 35px; }
.field {
  position: relative;
  display: flex;
  align-items: center;
  height: 45px;
  margin-top: 18px;
  border: 1px solid #e2e2e2;
  border-radius: 5px;
}
.field label {
  position: absolute;
  top: -12px;
  left: 5px;
  padding: 0 6px;
  background: #fff;
  font-size: 15px;
  line-height: 20px;
  font-weight: 500;
  color: #808080;
}
.field input, .field select {
  flex: 1;
  height: 43px;
  padding: 0 11px;
  appearance: none;
  color: #808080;
  opacity: 1;
}
.arrow { position: absolute; right: 17px; }
.hint { margin: 4px 12px 0; font-size: 15px; line-height: 20px; color: #717171; }
.nested { margin: 3px 0 0 12px; }
.nested + .field { margin-top: 30px; }

.summary { margin: 31px 0 0 140px; width: 391px; flex: none; }
.summary h2 { font-size: 24px; margin-bottom: 11px; }
.summary table { width: 100%; border-collapse: collapse; border-top: 1px solid #dadce0; line-height: 25px; }
.summary tr { border-bottom: 1px solid #dadce0; }
.summary th { width: 205px; padding: 3px 36px 1px 0; text-align: left; vertical-align: top; font-weight: 500; color: #000; }
.summary td { padding: 3px 0 1px; vertical-align: top; white-space: nowrap; color: #616161; }
.summary td div + div { margin-top: 5px; }
.help { display: inline-block; margin-left: 1px; vertical-align: -4px; }

.track { align-self: stretch; width: 12px; margin-left: auto; margin-right: 1px; padding-top: 75px; }
.thumb { height: 235px; background: #cbcbcb; border: 1px solid #b8b8b8; border-right: 0; }

.snackbar {
  position: absolute;
  right: 30px;
  bottom: 0;
  width: 537px;
  height: 10px;
  background: #202124;
  border-radius: 3px 3px 0 0;
  box-shadow: 0 0 8px #bbb;
}

/* Windows taskbar */
.taskbar {
  flex: none;
  height: 60px;
  display: grid;
  grid-template-columns: 1fr auto 1fr;
  align-items: center;
  border-top: 1px solid #b5b2b2;
  background: linear-gradient(90deg, #eff0f4, #efedec 14%, #f3e4dc 27%, #efeae8 34%, #f0e0da 41%, #e8dcda 52%, #e7dad7 66%, #f0dcda 74%, #efe0d8 82%, #ecdfe2 90%, #e6dfe5);
  font-family: "Noto Sans", sans-serif;
  font-size: 14px;
  color: #222;
}
.weather { position: relative; display: flex; align-items: center; gap: 5px; padding: 0 0 2px 24px; height: 59px; align-self: start; }
.weather svg { align-self: flex-start; margin-top: 6px; }
.badge { position: absolute; left: 38px; top: 7px; width: 20px; text-align: center; line-height: 20px; color: #fff; }
.weather-text { display: flex; flex-direction: column; line-height: 20px; }
.dim { color: #5c5c5c; }
.apps { display: flex; align-items: center; }
.app { position: relative; width: 55px; height: 48px; flex: none; }
.app.focused { width: 48px; margin: 0 3px 0 4px; background: #f7f0ee; border: 1px solid #efe6e3; border-radius: 5px; }
.app.running::after {
  content: "";
  position: absolute;
  left: calc(50% - 4px);
  bottom: 0;
  width: 8px;
  height: 4px;
  border-radius: 2px;
  background: #868080;
}
.app.focused::after { left: calc(50% - 10px); width: 20px; background: #0f74cf; }
.task-search {
  width: 274px;
  height: 39px;
  margin: 0 2px 0 4px;
  display: flex;
  align-items: center;
  gap: 12px;
  padding: 0 7px 0 13px;
  background: #fbf8f7;
  border: 1px solid #d9cfcc;
  border-radius: 20px;
}
.task-search input { flex: 1; min-width: 0; font-size: 16px; }
.task-search input::placeholder { color: #5c5c5c; opacity: 1; }
.myhp {
  width: 30px;
  height: 30px;
  background: #0096d6;
  color: #fff;
  font-size: 10px;
  line-height: 30px;
  font-style: italic;
}
.myhp b { font-size: 12px; }
.tray { display: flex; align-items: center; justify-content: flex-end; padding-right: 24px; }
.tray button { height: 40px; width: 40px; }
.tray .status { width: 92px; gap: 10px; margin-left: 4px; }
.clock { display: flex; flex-direction: column; align-items: flex-end; width: 92px; padding-bottom: 2px; line-height: 20px; }
```
